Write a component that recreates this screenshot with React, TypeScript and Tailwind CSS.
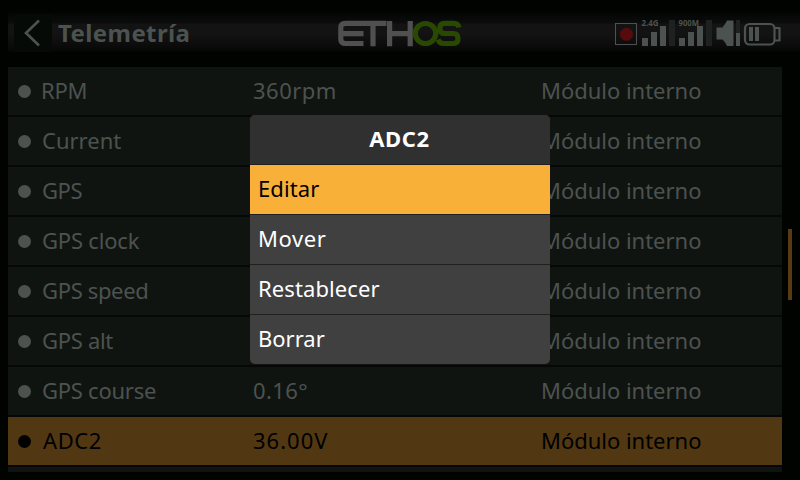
import React from "react";

type Sensor = { name: string; value: string; tracking: string; valueTracking: string; selected?: boolean };

const sensors: Sensor[] = [
  { name: "RPM", value: "360rpm", tracking: "-ml-px tracking-[-0.2px]", valueTracking: "tracking-[0.5px]" },
  { name: "Current", value: "", tracking: "tracking-[0px]", valueTracking: "" },
  { name: "GPS", value: "", tracking: "tracking-[-0.4px]", valueTracking: "" },
  { name: "GPS clock", value: "", tracking: "tracking-[-0.2px]", valueTracking: "" },
  { name: "GPS speed", value: "", tracking: "tracking-[-0.35px]", valueTracking: "" },
  { name: "GPS alt", value: "", tracking: "tracking-[-0.3px]", valueTracking: "" },
  { name: "GPS course", value: "0.16°", tracking: "tracking-[-0.25px]", valueTracking: "tracking-[0.4px]" },
  { name: "ADC2", value: "36.00V", tracking: "ml-px tracking-[0.6px]", valueTracking: "tracking-[1px]", selected: true },
];

const menu = [
  { label: "Editar", tracking: "tracking-[0.1px]", active: true },
  { label: "Mover", tracking: "tracking-[0.6px]" },
  { label: "Restablecer", tracking: "tracking-[0.1px]" },
  { label: "Borrar", tracking: "tracking-[0px]" },
];

function Logo() {
  return (
    <svg className="mt-[20px] h-[27px] w-[124px]" viewBox="0 0 124 27" fill="none" strokeWidth="5.2">
      <path stroke="#4f504f" d="M48.500 3.400H7.500Q2.800 3.400 2.800 8V19Q2.800 23.500 7.500 23.500H25.500M3 13.600H25.500M35 4V26.200M51.600 1V26.200M72.200 1V26.200M52 13.600H72" />
      <ellipse cx="87.500" cy="13.500" rx="10.200" ry="10" stroke="#294800" />
      <path stroke="#294800" d="M121 7.500Q120 3.400 116 3.400H106.500Q101.800 3.400 101.800 8.400T106.500 13.500H115.500Q120 13.500 120 18.500T115.500 23.500H105.500Q101.500 23.500 100 19.500" />
    </svg>
  );
}

function StatusIcons() {
  return (
    <svg className="mt-[16px] h-[34px] w-[170px]" viewBox="614 16 170 34">
      <rect x="615.5" y="23.5" width="21" height="21" fill="none" stroke="#4c524f" />
      <circle cx="626.5" cy="34.3" r="6.500" fill="#560c0c" />
      <g fill="#4c524f">
        <path d="M642 38h6v8h-6zM651 32h6v14h-6zM660 26h6v20h-6zM679 38h6v8h-6zM688 32h6v14h-6zM697 26h6v20h-6z" />
        <path d="M716.500 27.500h5.500V39.500h-5.500zM723 26.500Q725.500 24 727 20.500H733.500V46H727Q725.500 42.500 723 40z" />
        <path d="M721.500 27.500h2v12h-2zM736 33h4v13h-4zM749 27h4v14h-4zM755 27h4v14h-4z" />
        <text x="641.500" y="26" fontSize="9" fontWeight="700" fontFamily="Noto Sans, sans-serif" textLength="17" lengthAdjust="spacingAndGlyphs">2.4G</text>
        <text x="678.500" y="26" fontSize="9" fontWeight="700" fontFamily="Noto Sans, sans-serif" textLength="20.500" lengthAdjust="spacingAndGlyphs">900M</text>
      </g>
      <path d="M669 20h6v26h-6zM706 20h6v26h-6zM736 20h4v13h-4z" fill="#1d211f" />
      <rect x="745" y="24" width="29.500" height="20.500" rx="4.500" fill="none" stroke="#4c524f" strokeWidth="2.200" />
      <path d="M775 28h4.500v12.500h-4.500" fill="none" stroke="#4c524f" strokeWidth="2.200" strokeLinejoin="round" />
    </svg>
  );
}

export default function App() {
  return (
    <div className="relative h-[480px] w-[800px] overflow-hidden bg-[#000300] pl-2 font-['Noto_Sans',sans-serif] text-[22px] whitespace-nowrap">
      <header className="flex h-[67px] items-start bg-[linear-gradient(to_bottom,#000300_0px,#000300_11px,#060707_16px,#0b0c0b_23px,#121312_24px,#121312_33px,#0d0e0d_42px,#060706_51px,#000300_52px)]">
        <button className="mt-[14px] ml-1.5 h-[38px] w-[38px] bg-[#050a07]">
          <svg viewBox="0 0 38 38" className="size-[38px]" fill="none" stroke="#50504f" strokeWidth="2.600">
            <path d="M25 6.500L12 19L25 31.500" />
          </svg>
        </button>
        <h1 className="mt-[17px] ml-[6px] w-[280px] text-[24px] leading-8 font-bold tracking-[0.4px] text-[#4c524f]">Telemetría</h1>
        <Logo />
        <div className="ml-[152px]"><StatusIcons /></div>
      </header>

      <div className="flex">
        <div className="flex h-[405px] w-[774px] flex-col gap-0.5 overflow-hidden bg-[#060706]">
          {sensors.map((s) => (
            <div key={s.name} className={`flex h-12 shrink-0 items-center ${s.selected ? "bg-[#523812] text-black" : "bg-[#101411] text-[#4c524f]"}`}>
              <span className="ml-[10px] h-[13px] w-[13px] shrink-0 rounded-full bg-current" />
              <div className="flex pb-px pl-[11px]">
                <span className="w-[211px]"><span className={s.tracking}>{s.name}</span></span>
                <span className={`w-[288px] ${s.valueTracking}`}>{s.value}</span>
                <span className="tracking-[-0.02px]">Módulo interno</span>
              </div>
            </div>
          ))}
          <div className="h-[5px] shrink-0 bg-[#101411]" />
        </div>
        <div className="mt-[162px] ml-1.5 h-[71px] w-1 bg-[#573b13]" />
      </div>

      <div className="absolute top-[115px] left-[250px] h-[249px] w-[300px] overflow-hidden rounded-[5px] bg-[#404040] text-white">
        <div className="flex h-[50px] items-center justify-center border-b border-[#202020] bg-[#303030] pr-px pb-0.5 font-bold tracking-[0.6px]">ADC2</div>
        {menu.map((m) => (
          <div key={m.label} className={`flex h-[50px] items-center border-b border-[#202020] px-2 pb-0.5 last:h-[49px] last:border-b-0 ${m.tracking} ${m.active ? "bg-[#f9b038] text-black" : ""}`}>
            {m.label}
          </div>
        ))}
      </div>
    </div>
  );
}
